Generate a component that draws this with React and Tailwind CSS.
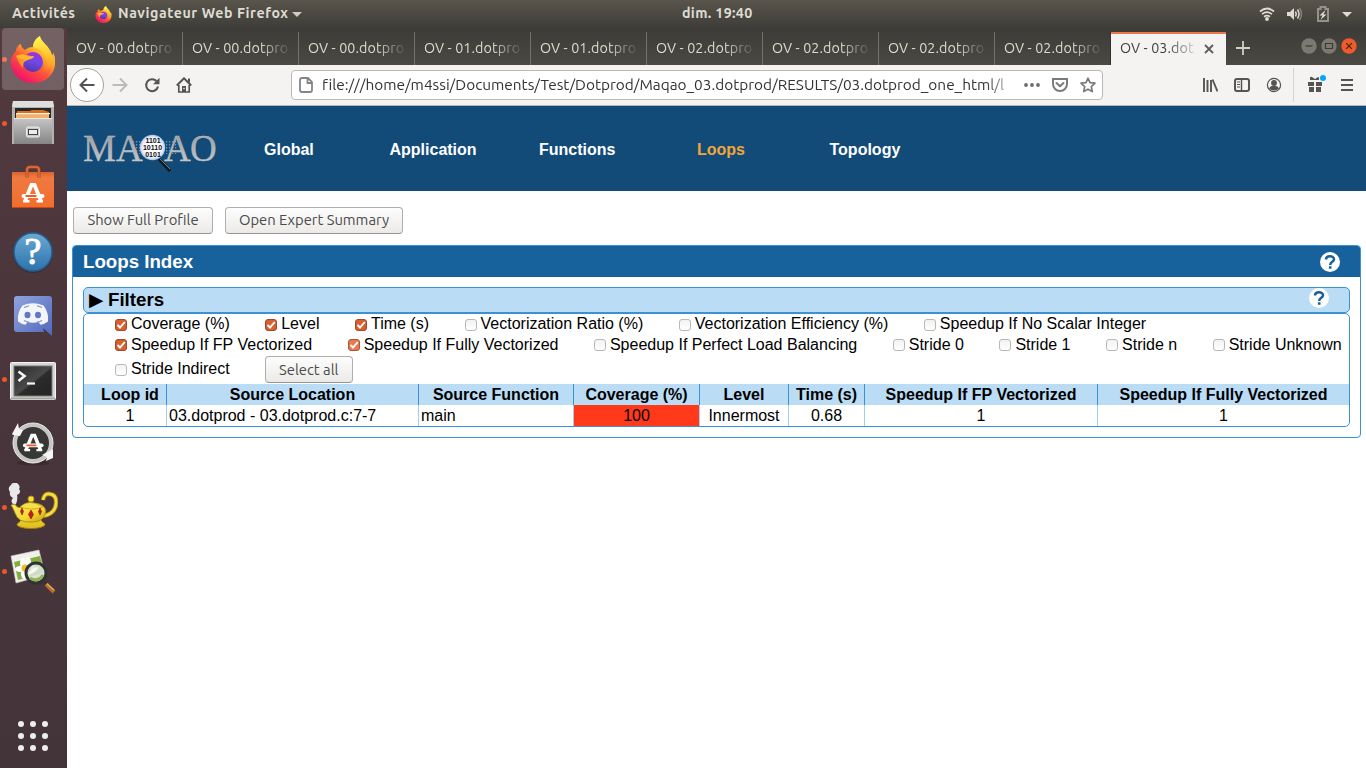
import React from "react";

const ui = "font-['Ubuntu','Noto_Sans',sans-serif]";

function FirefoxLogo({ id, className }) {
  return (
    <svg viewBox="0 0 46 47" className={className}>
      <defs>
        <linearGradient id={id + "a"} x1="0.85" y1="0.05" x2="0.25" y2="0.95">
          <stop offset="0" stopColor="#fff44f" />
          <stop offset="0.35" stopColor="#ffb22a" />
          <stop offset="0.6" stopColor="#ff5a35" />
          <stop offset="1" stopColor="#f0106c" />
        </linearGradient>
        <linearGradient id={id + "b"} x1="0.7" y1="0" x2="0.4" y2="1">
          <stop offset="0" stopColor="#a52de0" />
          <stop offset="0.5" stopColor="#6f48e8" />
          <stop offset="1" stopColor="#5635a8" />
        </linearGradient>
        <linearGradient id={id + "c"} x1="0.5" y1="0" x2="0.6" y2="1">
          <stop offset="0" stopColor="#fff653" />
          <stop offset="0.55" stopColor="#ffc52c" />
          <stop offset="1" stopColor="#ff8a2a" stopOpacity="0.2" />
        </linearGradient>
      </defs>
      <path d="M7 9c-1 2-1 4-1 6C2 19 0 24 1 29c2 11 11 18 22 18 13 0 23-9 22-22 0-3-1-6-2-8 0 1 0 2-1 3-1-6-5-10-8-13-2-2-4-5-4-7-4 2-7 7-7 11-3 0-6 1-8 3-2-1-4-3-4-6-2 0-4 3-4 5-1-1-1-3 0-4z" fill={`url(#${id}a)`} />
      <path d="M30 0c-4 2-7 7-7 11 6 1 10 4 12 9 2 6 1 12-3 16 7-1 12-6 13-13 0-2-1-5-2-6 0 1 0 2-1 3-1-6-5-10-8-13-2-2-4-5-4-7z" fill={`url(#${id}c)`} />
      <circle cx="23" cy="26" r="10" fill={`url(#${id}b)`} />
      <path d="M6 20c4-2 8-2 11-1 2 1 5 1 7 1-1 3-5 3-8 5-3 1-3 4-3 7-3-3-5-7-7-12z" fill="#ff9a2b" />
      <path d="M6 20c5-2 9-1 11 0 3 1 5 0 7 1-2 2-5 2-8 3-3-1-7-2-10-4z" fill="#ffb52c" />
    </svg>
  );
}

function FilesIcon() {
  return (
    <svg viewBox="0 0 44 46" className="h-[46px] w-[44px]">
      <defs>
        <linearGradient id="fl" x1="0" y1="0" x2="0" y2="1">
          <stop offset="0" stopColor="#c6c6c6" />
          <stop offset="1" stopColor="#858585" />
        </linearGradient>
      </defs>
      <path d="M2 1h40l1 6v37H1V7z" fill="#b2b2b2" />
      <path d="M2 1h40l1 6H1z" fill="#dedede" />
      <path d="M4 8h36v13H4z" fill="#292725" />
      <path d="M6 11h13l2-1h11l6 2v8H5z" fill="#d56f22" />
      <path d="M5 14h33v6H5z" fill="#f1b06d" />
      <path d="M5 13h34v1.2H5z" fill="#fff0d8" />
      <path d="M3 18h38v26H3z" fill="url(#fl)" />
      <path d="M3 18h38v1H3z" fill="#e8e8e8" />
      <rect x="15.5" y="27" width="13" height="10" rx="1.5" fill="#c9c9c9" stroke="#eee" />
      <rect x="17.5" y="29.5" width="9" height="5" fill="#ececec" stroke="#444" />
    </svg>
  );
}

function SoftwareA({ bar }) {
  return (
    <g fill="none" stroke="#fff">
      <path d="M14.5 35L21 19h3l6.500 16" strokeWidth="3.8" />
      <path d="M13 30h19" strokeWidth="4" strokeLinecap="round" />
      <path d="M15 30h11" stroke={bar} strokeWidth="2" />
      <path d="M12.500 35.200h6.500M26 35.200h6.500" strokeWidth="2.600" />
    </g>
  );
}

function SoftwareIcon() {
  return (
    <svg viewBox="0 0 44 44" className="h-[44px] w-[44px]">
      <defs>
        <linearGradient id="sw" x1="0" y1="0" x2="0" y2="1">
          <stop offset="0" stopColor="#d9612f" />
          <stop offset="0.15" stopColor="#ef7a40" />
          <stop offset="1" stopColor="#f26d2c" />
        </linearGradient>
      </defs>
      <path d="M1 7h42v36H1z" fill="url(#sw)" />
      <path d="M16 13V5q0-3 3-3h6q3 0 3 3v8" fill="none" stroke="#bd4b1c" strokeWidth="3" />
      <path d="M16 13V5q0-3 3-3h6q3 0 3 3v8" fill="none" stroke="#e0713f" strokeWidth="1.4" />
      <g transform="translate(-.5 1)"><SoftwareA bar="#ef5b22" /></g>
      <path d="M1 42.500h42" stroke="#ca4714" />
    </svg>
  );
}

function HelpIcon() {
  return (
    <svg viewBox="0 0 42 42" className="mt-[2px] h-[42px] w-[42px]">
      <defs>
        <linearGradient id="hp" x1="0" y1="0" x2="0" y2="1">
          <stop offset="0" stopColor="#6aa9d5" />
          <stop offset="1" stopColor="#2c73aa" />
        </linearGradient>
      </defs>
      <circle cx="21" cy="22" r="20" fill="#352329" opacity=".5" />
      <circle cx="21" cy="21" r="19" fill="url(#hp)" stroke="#235f91" strokeWidth="1.500" />
      <text x="21" y="33" textAnchor="middle" fill="#fff" stroke="#fff" strokeWidth="1" className="font-['Liberation_Serif',serif] text-[38px]">?</text>
    </svg>
  );
}

function DiscordIcon() {
  return (
    <svg viewBox="0 0 40 42" className="mt-[2px] h-[42px] w-[40px]">
      <defs>
        <linearGradient id="dc" x1="0" y1="0" x2="1" y2="1">
          <stop offset="0" stopColor="#8fa4dd" />
          <stop offset="1" stopColor="#5068bd" />
        </linearGradient>
      </defs>
      <path d="M4 1h32q3 0 3 3v37l-9-8 1 4H4q-3 0-3-3V4q0-3 3-3z" fill="url(#dc)" />
      <path d="M9.500 10.500Q20 6 30.500 10.500q5.500 7 4.500 16-4 3-7.500 3.200l-2-2.700q-5.500 1.500-11 0l-2 2.700Q9 29.500 5 26.500q-1-9 4.500-16z" fill="#f4f5f8" />
      <ellipse cx="14.500" cy="20" rx="3" ry="3.300" fill="#6078c6" />
      <ellipse cx="25" cy="20" rx="3" ry="3.300" fill="#6078c6" />
      <path d="M11 12.500l5-1.800M29 12.500l-5-1.800M11 25.500q3 1.500 5 1.700M29 25.500q-3 1.500-5 1.700" fill="none" stroke="#7d92d2" strokeWidth="1.200" />
    </svg>
  );
}

function TerminalIcon() {
  return (
    <svg viewBox="0 0 46 38" className="mt-[3px] h-[38px] w-[46px]">
      <defs>
        <linearGradient id="tm" x1="0" y1="0" x2="1" y2="1">
          <stop offset="0" stopColor="#292929" />
          <stop offset="0.5" stopColor="#4a4a4a" />
          <stop offset="0.55" stopColor="#2b2b2b" />
          <stop offset="1" stopColor="#242424" />
        </linearGradient>
      </defs>
      <rect x=".5" y=".5" width="45" height="37" rx="1" fill="#d7d7d5" stroke="#f3f3f1" />
      <path d="M1 36.500h44" stroke="#a4a4a0" strokeWidth="2" />
      <rect x="4" y="4" width="38" height="30" fill="url(#tm)" stroke="#777" />
      <path d="M8.500 9.500l6 4.500-6 5" fill="none" stroke="#f5f5f5" strokeWidth="2.600" />
      <path d="M17 21.500h8" stroke="#f5f5f5" strokeWidth="2.200" />
    </svg>
  );
}

function UpdaterIcon() {
  return (
    <svg viewBox="0 0 46 46" className="h-[46px] w-[46px]">
      <ellipse cx="23" cy="43" rx="16" ry="2.500" fill="#2b1d23" opacity=".5" />
      <circle cx="23" cy="23" r="18" fill="#373736" stroke="#c5c5c4" strokeWidth="4" />
      <circle cx="23" cy="23" r="20" fill="none" stroke="#e9e9e8" strokeWidth="1" />
      <path d="M8 3l1 6 4 1-3 6-7-1-1-1z" fill="#f5f5f4" />
      <path d="M43 29l-11 6 5 2-1 4 7-3z" fill="#f5f5f4" />
      <g transform="translate(3 2) scale(.9) translate(0 -4)"><SoftwareA bar="#ed5a22" /></g>
    </svg>
  );
}

function LampIcon() {
  return (
    <svg viewBox="0 0 50 48" className="h-[48px] w-[50px]">
      <defs>
        <linearGradient id="lp" x1="0" y1="0" x2="1" y2="1">
          <stop offset="0" stopColor="#f8ef67" />
          <stop offset="0.6" stopColor="#f4d92f" />
          <stop offset="1" stopColor="#c59711" />
        </linearGradient>
      </defs>
      <path d="M5 21q-3-3 0-6-4-2-3-6-3-4 1-7 1-3 6-2 4 3 2 6 3 4-2 6 1 4-1 9z" fill="#e9e9e9" />
      <path d="M35 17q1-7 7-6 7 1 6 10-1 10-13 12" fill="none" stroke="#a1800e" strokeWidth="4.500" />
      <path d="M35 17q1-7 7-6 7 1 6 10-1 10-13 12" fill="none" stroke="#f2dc42" strokeWidth="2.800" />
      <ellipse cx="23" cy="41.500" rx="14" ry="4" fill="#e2c021" stroke="#a57b0e" />
      <path d="M14 35h18l4 7H10z" fill="#e4c629" />
      <path d="M3 22l4-1q2 5 8 3 0-4 8-4 10 0 13 4 3 3 1 8-3 7-13 7-14 1-17-9-2-5-4-8z" fill="url(#lp)" stroke="#a5850c" strokeWidth=".8" />
      <path d="M12 24q9-9 23 0-11 4-23 0z" fill="#f4e14a" stroke="#c29b15" strokeWidth=".7" />
      <circle cx="23" cy="16" r="3" fill="#f5df42" stroke="#b8900e" />
      <g fill="#c71c24" stroke="#86150f" strokeWidth=".6">
        <path d="M14 25l1.500 3.500L14 32l-1.500-3.500zM23 27l2.500 4.500L23 36l-2.500-4.500zM32 25l1.500 3.500L32 32l-1.500-3.500z" />
      </g>
    </svg>
  );
}

function ViewerIcon() {
  return (
    <svg viewBox="0 0 46 46" className="h-[46px] w-[46px]">
      <path d="M1 8L29 2l6 25-29 8z" fill="#f0f0ec" stroke="#c8cac1" strokeWidth=".6" />
      <path d="M4 14l26-6 4 17-26 7z" fill="#84ad3f" />
      <g fill="#fff">
        <ellipse cx="13" cy="15" rx="3" ry="5" /><ellipse cx="18" cy="14" rx="3" ry="5" />
        <ellipse cx="10" cy="21" rx="5" ry="3" /><ellipse cx="14" cy="26" rx="3" ry="5" />
        <ellipse cx="20" cy="18" rx="5" ry="3" />
      </g>
      <circle cx="15" cy="20" r="3.500" fill="#edbd25" />
      <circle cx="26" cy="25" r="10" fill="#dce2d7" fillOpacity=".88" stroke="#303333" strokeWidth="3" />
      <path d="M18 27q2-8 11-8-2 5-11 8z" fill="#fff" opacity=".8" />
      <path d="M20 30q8 5 13-3" fill="none" stroke="#92b454" strokeWidth="3" />
      <path d="M33 32l4 4" stroke="#343434" strokeWidth="4" />
      <path d="M36 36l8 8" stroke="#b66c2b" strokeWidth="4" />
      <path d="M37 36l7 6" stroke="#e6a562" strokeWidth="1.200" />
    </svg>
  );
}

const dock = [
  { icon: <FirefoxLogo id="dock" className="h-[47px] w-[46px]" />, on: true, active: true },
  { icon: <FilesIcon />, on: true },
  { icon: <SoftwareIcon /> },
  { icon: <HelpIcon /> },
  { icon: <DiscordIcon /> },
  { icon: <TerminalIcon />, on: true },
  { icon: <UpdaterIcon /> },
  { icon: <LampIcon />, on: true },
  { icon: <ViewerIcon />, on: true },
];

function Dock() {
  return (
    <aside className="flex w-[67px] shrink-0 flex-col bg-gradient-to-b from-[#523a3e] via-[#49353c] to-[#43343a]">
      {dock.map((d, i) => (
        <div key={i} className="flex h-16 items-start">
          <span className="mt-[29px] ml-[2px] h-[5px] w-[5px] shrink-0">
            {d.on && <span className="block h-[5px] w-[5px] rounded-full bg-[#f0552a]" />}
          </span>
          <div className={"-ml-[5px] flex h-[62px] w-[62px] items-center justify-center rounded-[4px] " + (d.active ? "bg-white/20" : "")}>
            {d.icon}
          </div>
        </div>
      ))}
      <svg viewBox="0 0 30 30" className="mt-auto mb-[17px] ml-[18px] h-[30px] w-[30px]" fill="#eeeeec">
        {[3, 15, 27].map((y) => [3, 15, 27].map((x) => <circle key={x + "-" + y} cx={x} cy={y} r="3" />))}
      </svg>
    </aside>
  );
}

function TopBar() {
  return (
    <header className={`flex h-7 shrink-0 items-center bg-gradient-to-b from-[#59554c] to-[#3e3d39] text-[14px] font-bold text-[#dfdbd2] ${ui}`}>
      <span className="ml-3 w-[83px] text-[14.200px] tracking-[0.500px] whitespace-nowrap">Activités</span>
      <FirefoxLogo id="top" className="h-[17px] w-[17px]" />
      <span className="ml-[6px] w-[171px] text-[14.200px] tracking-[0.580px] whitespace-nowrap">Navigateur Web Firefox</span>
      <svg viewBox="0 0 10 5" className="ml-[3px] h-[5px] w-[10px]"><path d="M0 0h10L5 5z" fill="#cfccc4" /></svg>
      <span className="ml-[380px] text-[14.200px] tracking-[0.350px] whitespace-nowrap">dim. 19:40</span>
      <div className="mr-[14px] ml-auto flex items-center">
        <svg viewBox="0 0 16 14" className="h-[14px] w-4" fill="none" stroke="#dfdbd2" strokeWidth="1.700">
          <path d="M1 4.500q7-6 14 0M3 7.200q5-4 10 0M5 9.700q3-2 6 0" />
          <circle cx="8" cy="12" r="1.900" fill="#dfdbd2" stroke="none" />
        </svg>
        <svg viewBox="0 0 16 14" className="ml-3 h-[14px] w-4">
          <path d="M0 5h3l4-4v12L3 9H0z" fill="#dfdbd2" />
          <path d="M8.500 4.500q1.500 2.500 0 5M10.500 2.500q3 4.500 0 9" fill="none" stroke="#dfdbd2" strokeWidth="1.500" />
          <path d="M12.500 1q4 6 0 12" fill="none" stroke="#85827b" strokeWidth="1.500" />
        </svg>
        <svg viewBox="0 0 12 16" className="ml-[14px] h-4 w-3">
          <path d="M1 3h2.500V1h5v2H11v12H1z" fill="none" stroke="#96928a" strokeWidth="2" />
          <path d="M8.500 4L2.500 9.500h3L3.500 14l6-5.500h-3z" fill="#dfdbd2" />
        </svg>
        <svg viewBox="0 0 10 5" className="ml-[13px] h-[5px] w-[10px]"><path d="M0 0h10L5 5z" fill="#dfdbd2" /></svg>
      </div>
    </header>
  );
}

const tabs = ["00", "00", "00", "01", "01", "02", "02", "02", "02"];

function Tabs() {
  return (
    <div className={`flex h-[37px] bg-gradient-to-b from-[#3c3b37] to-[#4a4943] text-[14px] text-[#dfdbd2] ${ui}`}>
      {tabs.map((n, i) => (
        <div key={i} className={"mt-1 flex h-[33px] w-[116px] shrink-0 items-center border-r pl-[9px] " + (i < 8 ? "border-[#74726c]" : "border-[#31302d]")}>
          <span className="w-[99px] overflow-hidden text-[14.300px] tracking-[0.100px] whitespace-nowrap [mask-image:linear-gradient(to_right,#000_68px,transparent_100px)]">
            OV - {n}.dotpro
          </span>
        </div>
      ))}
      <div className="mt-1 flex h-[33px] w-[115px] shrink-0 items-center border-t-2 border-[#f0764b] bg-[#f4f3f2] pb-px pl-[9px] text-[#42413e]">
        <span className="w-[80px] overflow-hidden text-[14.300px] tracking-[0.100px] whitespace-nowrap [mask-image:linear-gradient(to_right,#000_48px,transparent_80px)]">OV - 03.dot</span>
        <svg viewBox="0 0 10 10" className="ml-[4px] h-[10px] w-[10px]"><path d="M1 1l8 8M9 1L1 9" stroke="#5d5c5a" strokeWidth="1.800" /></svg>
      </div>
      <svg viewBox="0 0 14 14" className="mt-[13px] ml-[10px] h-[14px] w-[14px]"><path d="M0 7h14M7 0v14" stroke="#d2cfc6" strokeWidth="1.800" /></svg>
      <div className="mt-[10px] mr-[9px] ml-auto flex gap-1">
        <svg viewBox="0 0 16 16" className="h-4 w-4"><circle cx="8" cy="8" r="7.700" fill="#7b7972" /><path d="M4.500 8h7" stroke="#3c3b37" strokeWidth="1.200" /></svg>
        <svg viewBox="0 0 16 16" className="h-4 w-4"><circle cx="8" cy="8" r="7.700" fill="#7b7972" /><path d="M4.500 5.500h7v5h-7z" fill="none" stroke="#3c3b37" strokeWidth="1.200" /></svg>
        <svg viewBox="0 0 16 16" className="h-4 w-4"><circle cx="8" cy="8" r="7.700" fill="#ed5b2b" /><path d="M5.200 5.200l5.600 5.600M10.800 5.200l-5.600 5.600" stroke="#42240f" strokeWidth="1.200" /></svg>
      </div>
    </div>
  );
}

function Toolbar() {
  return (
    <div className="flex h-[41px] items-center border-b border-[#b8b6b3] bg-[#f4f3f2]">
      <div className="ml-[3px] flex h-[34px] w-[34px] items-center justify-center rounded-full border border-[#a3a2a0] bg-white">
        <svg viewBox="0 0 16 16" className="h-4 w-4" fill="none" stroke="#555453" strokeWidth="2"><path d="M15.500 8H2M8 1.500L1.500 8 8 14.500" /></svg>
      </div>
      <svg viewBox="0 0 16 16" className="ml-2 h-4 w-4" fill="none" stroke="#bbbab8" strokeWidth="2"><path d="M.5 8H14M8 1.500L14.500 8 8 14.500" /></svg>
      <svg viewBox="0 0 16 16" className="ml-4 h-4 w-4" fill="none" stroke="#555453" strokeWidth="2">
        <path d="M14 9.500A6 6 0 1 1 12.500 4" /><path d="M15.500 .8v6.500H9z" fill="#555453" stroke="none" />
      </svg>
      <svg viewBox="0 0 16 16" className="ml-4 h-4 w-4">
        <path d="M.8 8.500L8 1.300l7.200 7.200" fill="none" stroke="#555453" strokeWidth="2" />
        <path d="M2.800 8v7h10.400V8" fill="none" stroke="#555453" strokeWidth="1.700" />
        <path d="M6 15V9h4v6z" fill="#555453" /><path d="M12 1.500h2v4h-2z" fill="#555453" /><circle cx="8" cy="11.500" r=".8" fill="#f4f3f2" />
      </svg>
      <div className={`ml-[99px] flex h-[30px] w-[812px] items-center rounded-[4px] border border-[#bcb9b5] bg-white ${ui}`}>
        <svg viewBox="0 0 14 16" className="ml-[7px] h-4 w-[14px]" fill="none" stroke="#848484" strokeWidth="1.800"><path d="M3 1h6l4 4v8q0 2-2 2H3q-2 0-2-2V3q0-2 2-2zM8.500 1v5H13" /></svg>
        <span className="ml-[9px] w-[696px] overflow-hidden text-[15.400px] tracking-[-0.010px] whitespace-nowrap text-[#333] [mask-image:linear-gradient(to_right,#000_664px,transparent_696px)]">
          file:///home/m4ssi/Documents/Test/Dotprod/Maqao_03.dotprod/RESULTS/03.dotprod_one_html/l
        </span>
        <svg viewBox="0 0 16 4" className="ml-[6px] h-1 w-4" fill="#6b6b6b"><circle cx="2" cy="2" r="1.900" /><circle cx="8" cy="2" r="1.900" /><circle cx="14" cy="2" r="1.900" /></svg>
        <svg viewBox="0 0 16 14" className="ml-3 h-[14px] w-4" fill="none" stroke="#7b7b7b" strokeWidth="2"><path d="M1 1h14v5a7 7 0 0 1-14 0z" /><path d="M4.500 5L8 8.300 11.500 5" strokeLinecap="round" strokeLinejoin="round" /></svg>
        <svg viewBox="0 0 16 16" className="ml-3 h-4 w-4" fill="none" stroke="#7b7b7b" strokeWidth="1.700" strokeLinejoin="round"><path d="M8 1.200l2 4.500 5 .5-3.700 3.400 1 5L8 12.200l-4.300 2.400 1-5L1 6.200l5-.5z" /></svg>
      </div>
      <div className="ml-auto flex h-full items-center">
        <svg viewBox="0 0 16 14" className="h-[14px] w-4" stroke="#555453" strokeWidth="2" fill="none"><path d="M2 0v14M5.500 2v12M9 2v12" strokeWidth="1.900" /><path d="M10.500 1.500L15.500 13.500" strokeWidth="1.900" /></svg>
        <svg viewBox="0 0 16 14" className="ml-4 h-[14px] w-4" stroke="#555453" fill="none"><rect x="1" y="1" width="14" height="12" rx="2" strokeWidth="2" /><path d="M7.500 1v12" strokeWidth="1.500" /><path d="M3 4h3M3 6.500h3M3 9h3" strokeWidth="1" /></svg>
        <svg viewBox="0 0 16 16" className="ml-4 h-4 w-4"><circle cx="8" cy="8" r="6.600" fill="none" stroke="#555453" strokeWidth="1.200" /><circle cx="8" cy="6" r="2.900" fill="#555453" /><path d="M3 11.500q1-2.500 3-2.500h4q2 0 3 2.500-5 4-10 0z" fill="#555453" /></svg>
        <span className="ml-[11px] h-[34px] w-px bg-[#d4d3d1]" />
        <svg viewBox="0 0 20 18" className="mb-[2px] ml-[13px] h-[18px] w-5" fill="#555453"><path d="M1 7h6v4H1zM9 7h6v4H9zM2 12h5v5H2zM9 12h5v5H9zM3 3q0-2 2-1l3 2 3-2q1 0 1 1v2H3z" /><circle cx="16" cy="3" r="3" fill="#00a8ff" /></svg>
        <svg viewBox="0 0 12 12" className="mr-[13px] ml-[14px] h-3 w-3" stroke="#555453" strokeWidth="1.900"><path d="M0 1h12M0 6h12M0 11h12" /></svg>
      </div>
    </div>
  );
}

function Logo() {
  return (
    <svg viewBox="0 0 140 44" className="h-[44px] w-[140px] font-normal">
      <defs>
        <linearGradient id="silver" x1="0" y1="0" x2="0" y2="1">
          <stop offset="0" stopColor="#8f9499" /><stop offset="1" stopColor="#d0d0d0" />
        </linearGradient>
        <radialGradient id="lens"><stop offset="0.6" stopColor="#fff" /><stop offset="0.85" stopColor="#e5e2fb" /><stop offset="1" stopColor="#8fc5de" /></radialGradient>
        <pattern id="bits" width="3" height="3" patternUnits="userSpaceOnUse"><path d="M0 0h1.200v1.500H0z" fill="#7591ad" /></pattern>
      </defs>
      <path d="M51 12h45v13H51z" fill="url(#bits)" />
      <g fill="url(#silver)" stroke="#c4c6c8" strokeWidth=".3" className="font-['Liberation_Serif',serif] text-[37px]">
        <text x="1" y="32">M</text><text x="34" y="32">A</text><text x="82" y="32">A</text><text x="108" y="32">O</text>
      </g>
      <path d="M77 30l11 12" stroke="#171717" strokeWidth="3.200" /><path d="M78 30l10 10" stroke="#94908c" strokeWidth=".8" />
      <circle cx="70.500" cy="18.500" r="12.700" fill="url(#lens)" />
      <g fill="#111" className="font-['Liberation_Sans',sans-serif] text-[7px] font-bold" textAnchor="middle">
        <text x="71" y="14">1101</text><text x="70.500" y="21">10110</text><text x="71" y="28">0101</text>
      </g>
    </svg>
  );
}

function QuestionBadge({ className }) {
  return (
    <span className={"flex h-5 w-5 items-center justify-center rounded-full bg-white " + className}>
      <svg viewBox="0 0 12 14" className="h-[14px] w-3" fill="none" stroke="#17619c" strokeWidth="2.500"><path d="M2 4.500C2 .3 10 .3 10 4.200 10 7 6.200 6.600 6.200 10" /><path d="M4.900 11.300h2.600v2.500H4.900z" fill="#17619c" stroke="none" /></svg>
    </span>
  );
}

function Button({ children, className }) {
  return (
    <button className={`flex h-[27px] items-center justify-center rounded-[4px] border border-[#b0aeab] border-b-[#979592] bg-gradient-to-b from-[#fdfdfd] to-[#ebeae8] whitespace-nowrap text-[#4c4b49] ${ui} ${className}`}>
      {children}
    </button>
  );
}

function Check({ label, on, light, className = "", box = "mt-[5px]" }) {
  return (
    <label className={"flex items-start whitespace-nowrap " + className}>
      <span className={box + " mr-1 flex h-3 w-3 items-center justify-center rounded-[3px] border " + (on ? (light ? "border-[#a8573b] bg-[#e8794f]" : "border-[#9b482e] bg-[#d8602f]") : "border-[#b9b8b6] bg-gradient-to-b from-[#f2f2f1] to-white")}>
        {on && <svg viewBox="0 0 10 10" className="h-[10px] w-[10px] shrink-0"><path d="M1.500 5l2.500 2.500L8.800 2" fill="none" stroke="#fff" strokeWidth="1.900" /></svg>}
      </span>
      {label}
    </label>
  );
}

const columns = [
  ["Loop id", "1", "w-[83px]", "justify-center"],
  ["Source Location", "03.dotprod - 03.dotprod.c:7-7", "w-[252px]", "pl-[2px]"],
  ["Source Function", "main", "w-[155px]", "pl-[2px]"],
  ["Coverage (%)", "100", "w-[126px]", "justify-center bg-[#ff391a]"],
  ["Level", "Innermost", "w-[89px]", "justify-center"],
  ["Time (s)", "0.68", "w-[76px]", "justify-center"],
  ["Speedup If FP Vectorized", "1", "w-[233px]", "justify-center"],
  ["Speedup If Fully Vectorized", "1", "w-[251px]", "justify-center"],
];

export default function App() {
  return (
    <div className="flex h-[768px] w-[1366px] flex-col overflow-hidden bg-white font-['Liberation_Sans',Arial,sans-serif]">
      <TopBar />
      <div className="flex min-h-0 flex-1">
        <Dock />
        <div className="flex min-w-0 flex-1 flex-col">
          <Tabs />
          <Toolbar />
          <nav className="flex h-[85px] shrink-0 items-center bg-[#124b78] text-[16px] font-bold text-white">
            <div className="ml-[15px] w-[182px] pt-[5px]"><Logo /></div>
            <span className="w-[125.500px] pt-[2px]">Global</span>
            <span className="w-[149.500px] pt-[2px]">Application</span>
            <span className="w-[158px] pt-[2px]">Functions</span>
            <span className="w-[132.500px] pt-[2px] text-[#f0a63a]">Loops</span>
            <span className="pt-[2px]">Topology</span>
          </nav>
          <main>
            <div className="mt-4 ml-[6px] flex gap-3">
              <Button className="w-[140px] text-[14.800px]">Show Full Profile</Button>
              <Button className="w-[178px] text-[14.800px]">Open Expert Summary</Button>
            </div>
            <section className="mt-[11px] ml-[5px] h-[193px] w-[1289px] overflow-hidden rounded-[4px] border border-[#3b91d1]">
              <div className="flex h-[31px] items-center bg-[#17619c] pl-[10px] text-[18.700px] font-bold text-white">
                <span className="pt-[2px]">Loops Index</span>
                <QuestionBadge className="mr-5 ml-auto" />
              </div>
              <div className="mx-[10px] mt-[10px]">
                <div className="flex h-[26px] items-center rounded-[5px] border border-[#3b91d1] bg-[#bbdcf5] pl-[5px] text-[18.700px] font-bold text-black">
                  <span className="w-[19px] font-['DejaVu_Sans',sans-serif] text-[18.700px] font-normal">▶</span>
                  <span className="pt-px">Filters</span>
                  <QuestionBadge className="mr-[20px] mb-[4px] ml-auto" />
                </div>
                <div className="h-[114px] overflow-hidden rounded-[5px] border border-[#3b91d1] text-[16px] leading-[21px] text-black">
                  <div className="flex h-[20px] gap-[35.500px] pl-[31px] leading-[19px]">
                    <Check on label="Coverage (%)" />
                    <Check on label="Level" />
                    <Check on label="Time (s)" />
                    <Check label="Vectorization Ratio (%)" />
                    <Check label="Vectorization Efficiency (%)" />
                    <Check label="Speedup If No Scalar Integer" />
                  </div>
                  <div className="flex h-[21px] gap-[35.500px] pl-[31px]">
                    <Check on label="Speedup If FP Vectorized" />
                    <Check on light label="Speedup If Fully Vectorized" />
                    <Check label="Speedup If Perfect Load Balancing" />
                    <Check label="Stride 0" />
                    <Check label="Stride 1" />
                    <Check label="Stride n" />
                    <Check label="Stride Unknown" />
                  </div>
                  <div className="flex h-[29px] gap-[35px] pl-[31px]">
                    <Check label="Stride Indirect" className="pt-[3px]" box="mt-[6px]" />
                    <Button className="mt-px w-[88px] text-[14.800px]">Select all</Button>
                  </div>
                  <div className="flex">
                    {columns.map(([head, value, size, cell], i) => (
                      <div key={head} className={"shrink-0 " + size}>
                        <div className={"flex h-[21px] items-center justify-center bg-[#bbdcf5] font-bold whitespace-nowrap " + (i === 0 ? "pl-[10px] " : "") + (i < 7 ? "border-r border-[#3b91d1]" : "")}>{head}</div>
                        <div className={"flex h-[21px] items-center whitespace-nowrap " + cell + (i === 0 ? " pl-[10px]" : "") + (i < 7 ? " border-r border-[#a5cdec]" : "")}>{value}</div>
                      </div>
                    ))}
                  </div>
                </div>
              </div>
            </section>
          </main>
        </div>
      </div>
    </div>
  );
}
